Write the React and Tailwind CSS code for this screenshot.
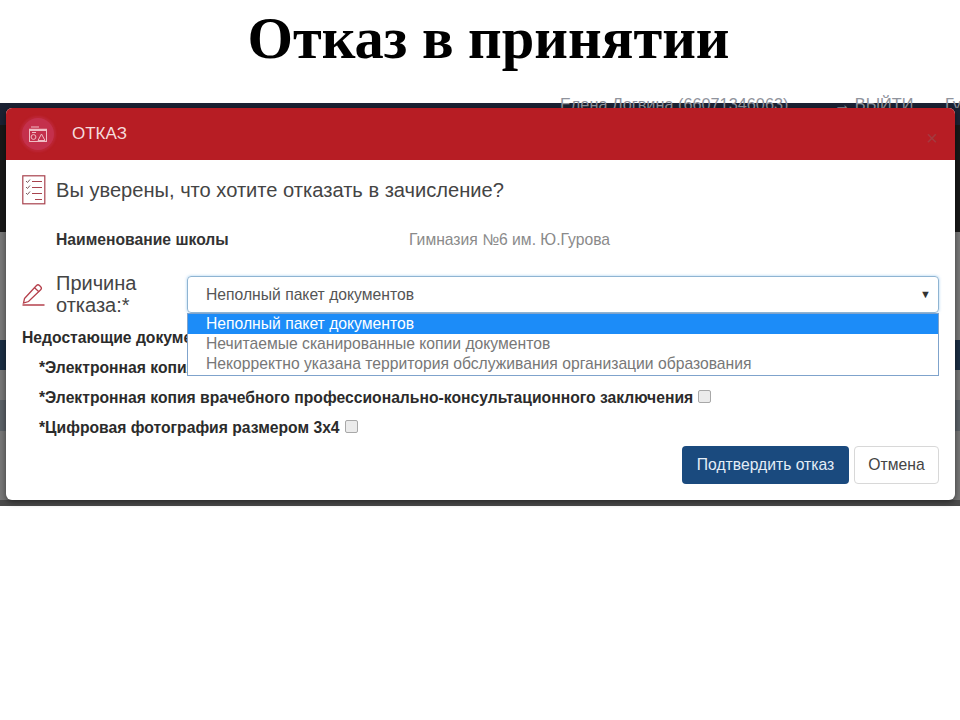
import React from 'react'

const sans = 'font-["Liberation_Sans",Arial,sans-serif]'

const HeaderIcon = () => (
  <div className="w-[32px] h-[32px] rounded-full bg-[#c4304c] shadow-[0_0_2px_2px_rgba(196,48,76,0.45)] flex items-center justify-center">
    <svg width="20" height="18" viewBox="0 0 20 18" fill="none" stroke="#f0bcc4" strokeWidth="1">
      <path d="M1 4.5h18" strokeWidth="1.6" />
      <path d="M3 2h8" strokeWidth="1.2" />
      <rect x="1.5" y="5.5" width="17" height="11" />
      <circle cx="5.5" cy="12" r="2.4" />
      <path d="M10 15.5l3.5-6.5 3.5 6.5z" />
      <path d="M4 7.5h4" />
    </svg>
  </div>
)

const ChecklistIcon = () => (
  <svg width="24" height="30" viewBox="0 0 24 30" fill="none" stroke="#a8434e" strokeWidth="1.2" className="shrink-0">
    <rect x="0.8" y="0.8" width="22" height="28" />
    <path d="M4 6l1.5 1.5L8 4.5M4 12l1.5 1.5L8 10.5M4 18l1.5 1.5L8 16.5" strokeWidth="1" stroke="#7d5a5e" />
    <path d="M10 6.5h10M10 12.5h10M10 18.5h10M13 24.5h7" />
  </svg>
)

const PencilIcon = () => (
  <svg width="23" height="23" viewBox="0 0 23 23" fill="none" stroke="#b5404c" strokeWidth="1.3" className="shrink-0">
    <path d="M2.5 15.5L14.5 2.5c1-1 2-1 3 0l1.2 1.2c1 1 1 2 0 3L6.5 18.5l-5 1.5z" />
    <path d="M12.5 4.8l4.4 4" />
    <path d="M0.5 22h22" strokeWidth="1.5" />
  </svg>
)

const docs = [
  '*Электронная копия документа об образовании',
  '*Электронная копия врачебного профессионально-консультационного заключения',
  '*Цифровая фотография размером 3х4',
]

const options = [
  'Неполный пакет документов',
  'Нечитаемые сканированные копии документов',
  'Некорректно указана территория обслуживания организации образования',
]

export default function App() {
  return (
    <div className={`w-[960px] h-[720px] bg-white overflow-hidden relative ${sans}`}>
      {/* Slide title */}
      <h1 className='h-[103px] pt-[4px] pl-[17px] text-center text-[58.5px] leading-[70px] font-bold text-black font-["Liberation_Serif",serif]'>
        Отказ в принятии
      </h1>

      {/* Dimmed page behind the modal */}
      <div className="flex flex-col h-[403px]">
        <div className="h-[22px] bg-[#1b2233]" />
        <div className="h-[107px] bg-[#181818]" />
        <div className="h-[108px] bg-[#797979]" />
        <div className="h-[30px] bg-[#1c2f45]" />
        <div className="h-[30px] bg-[#777777]" />
        <div className="h-[31px] bg-[#5c6268]" />
        <div className="flex-1 bg-[#777777]" />
        <div className="h-[6px] bg-[#4a4a4a]" />
      </div>

      {/* Top bar text clipped by the modal */}
      <div className="absolute left-[560px] top-[95px] h-[13px] overflow-hidden flex text-[16.3px] leading-[18px] text-[#8f939c] whitespace-nowrap">
        <span className="w-[274px]">Елена Логвина (66071346063)</span>
        <span className="w-[111px]">→ ВЫЙТИ</span>
        <span>Гу</span>
      </div>

      {/* Modal */}
      <div className="absolute left-[6px] top-[108px] w-[949px] h-[392px] bg-white rounded-[6px] shadow-[0_2px_6px_rgba(0,0,0,0.5)] overflow-hidden flex flex-col">
        <div className="h-[52px] shrink-0 bg-[#b71d24] flex items-center pl-[16px] pr-[17px]">
          <HeaderIcon />
          <span className="ml-[18px] text-[17px] text-[#f5dcdc]">ОТКАЗ</span>
          <span className="ml-auto mt-[8px] text-[20px] leading-none text-[#a33a3f]">×</span>
        </div>

        <div className="flex-1 flex flex-col pl-[16px] pr-[16px] relative text-[15.7px]">
          <div className="flex items-center gap-[10px] mt-[14px] h-[32px]">
            <ChecklistIcon />
            <span className="text-[20.1px] text-[#444444]">Вы уверены, что хотите отказать в зачисление?</span>
          </div>

          <div className="flex items-center mt-[24px] pl-[34px] h-[20px]">
            <span className="w-[353px] font-bold text-[#333333]">Наименование школы</span>
            <span className="text-[#8a8a8a]">Гимназия №6 им. Ю.Гурова</span>
          </div>

          <div className="flex items-center mt-[25px] h-[38px]">
            <div className="w-[165px] flex items-center gap-[11px]">
              <PencilIcon />
              <span className="text-[20px] leading-[22px] text-[#444444]">Причина<br />отказа:*</span>
            </div>
            <div className="relative flex-1 h-[37px] border border-[#8fb4d2] rounded-[4px] flex items-center justify-between pl-[18px] pr-[7px] pt-[1px] shadow-[0_0_3px_rgba(102,175,233,0.6)] text-[#555555]">
              <span>Неполный пакет документов</span>
              <span className="text-[11px] text-[#333333]">▼</span>
              <ul className="absolute z-10 left-[-1px] right-[-1px] top-[36px] h-[63px] border border-[#7fa3cc] bg-white leading-[20px] text-[#777777]">
                {options.map((o, i) => (
                  <li key={o} className={`pl-[18px] h-[20px] whitespace-nowrap ${i === 0 ? 'bg-[#1c8cf8] text-white' : ''}`}>{o}</li>
                ))}
              </ul>
            </div>
          </div>

          <div className="mt-[15px] h-[20px] leading-[20px] font-bold text-[#2b2b2b]">Недостающие документы:</div>
          <div className="flex flex-col gap-[10px] mt-[10px] pl-[17px]">
            {docs.map((d) => (
              <label key={d} className="h-[20px] flex items-center gap-[5px] font-bold text-[#2b2b2b]">
                <span>{d}</span>
                <span className="w-[13px] h-[13px] mb-[3px] rounded-[2px] border border-[#a8a8a8] bg-[#ebebeb]" />
              </label>
            ))}
          </div>

          <div className="flex justify-end gap-[5px] mt-[8px]">
            <button className="w-[167px] h-[38px] rounded-[4px] bg-[#1a4a7e] text-[#e4edf6]">Подтвердить отказ</button>
            <button className="w-[85px] h-[38px] rounded-[4px] border border-[#d8d8d8] bg-white text-[#444444]">Отмена</button>
          </div>
        </div>
      </div>
    </div>
  )
}
